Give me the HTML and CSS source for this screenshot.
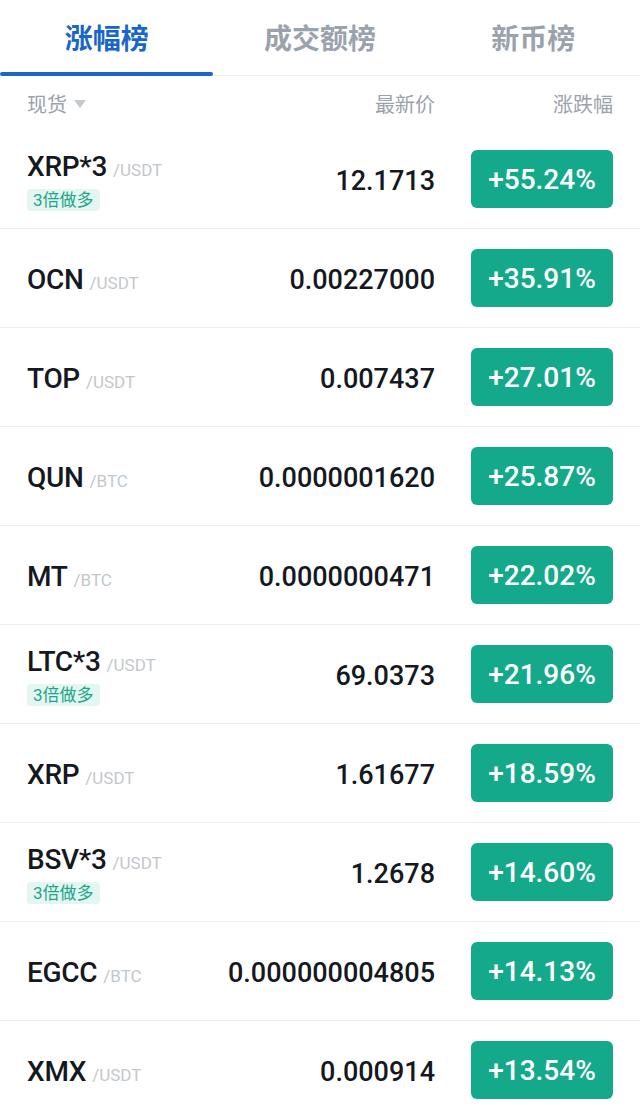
FILE: index.html
```html
<!DOCTYPE html>
<html lang="zh">
<head>
<meta charset="utf-8">
<link rel="stylesheet" href="styles.css">
</head>
<body>
<div class="page">
  <nav class="tabs">
    <div class="tab active">涨幅榜</div>
    <div class="tab">成交额榜</div>
    <div class="tab">新币榜</div>
  </nav>
  <div class="head">
    <div class="h-name">现货<span class="caret"></span></div>
    <div class="h-price">最新价</div>
    <div class="h-change">涨跌幅</div>
  </div>
  <ul class="list">
    <li class="row"><div class="sym"><div class="pair"><span class="name">XRP*3</span><span class="quote">/USDT</span></div><span class="tag">3倍做多</span></div><div class="price">12.1713</div><div class="chg">+55.24%</div></li>
    <li class="row"><div class="sym"><div class="pair"><span class="name">OCN</span><span class="quote">/USDT</span></div></div><div class="price">0.00227000</div><div class="chg">+35.91%</div></li>
    <li class="row"><div class="sym"><div class="pair"><span class="name">TOP</span><span class="quote">/USDT</span></div></div><div class="price">0.007437</div><div class="chg">+27.01%</div></li>
    <li class="row"><div class="sym"><div class="pair"><span class="name">QUN</span><span class="quote">/BTC</span></div></div><div class="price">0.0000001620</div><div class="chg">+25.87%</div></li>
    <li class="row"><div class="sym"><div class="pair"><span class="name">MT</span><span class="quote">/BTC</span></div></div><div class="price">0.0000000471</div><div class="chg">+22.02%</div></li>
    <li class="row"><div class="sym"><div class="pair"><span class="name">LTC*3</span><span class="quote">/USDT</span></div><span class="tag">3倍做多</span></div><div class="price">69.0373</div><div class="chg">+21.96%</div></li>
    <li class="row"><div class="sym"><div class="pair"><span class="name">XRP</span><span class="quote">/USDT</span></div></div><div class="price">1.61677</div><div class="chg">+18.59%</div></li>
    <li class="row"><div class="sym"><div class="pair"><span class="name">BSV*3</span><span class="quote">/USDT</span></div><span class="tag">3倍做多</span></div><div class="price">1.2678</div><div class="chg">+14.60%</div></li>
    <li class="row"><div class="sym"><div class="pair"><span class="name">EGCC</span><span class="quote">/BTC</span></div></div><div class="price">0.000000004805</div><div class="chg">+14.13%</div></li>
    <li class="row"><div class="sym"><div class="pair"><span class="name">XMX</span><span class="quote">/USDT</span></div></div><div class="price">0.000914</div><div class="chg">+13.54%</div></li>
  </ul>
</div>
</body>
</html>
```

FILE: styles.css
```css
* { box-sizing: border-box; }
html, body { margin: 0; padding: 0; background: #fff; }
body {
  font-family: Roboto, "Noto Sans CJK SC", sans-serif;
  color: #15191f;
  overflow: hidden;
}
.page { width: 640px; }

.tabs {
  display: flex;
  height: 76px;
  border-bottom: 1px solid #eef0f2;
}
.tab {
  flex: 1;
  display: flex;
  align-items: center;
  justify-content: center;
  padding-bottom: 2px;
  font-family: "Noto Sans CJK SC", sans-serif;
  font-size: 28px;
  font-weight: 700;
  color: #9aa3ad;
  position: relative;
}
.tab.active { color: #1a66c8; }
.tab.active::after {
  content: "";
  position: absolute;
  left: 0;
  right: 0;
  bottom: -1px;
  height: 4px;
  border-radius: 2px;
  background: #1a66c8;
}

.head {
  display: flex;
  align-items: center;
  height: 54px;
  padding: 0 27px;
  font-family: "Noto Sans CJK SC", sans-serif;
  font-size: 20px;
  color: #9aa3ab;
}
.h-name { flex: 1; display: flex; align-items: center; }
.caret {
  display: inline-block;
  margin-left: 7px;
  margin-top: 1px;
  width: 0;
  height: 0;
  border-left: 6px solid transparent;
  border-right: 6px solid transparent;
  border-top: 8px solid #c4c9cf;
}
.h-price { text-align: right; }
.h-change { width: 178px; text-align: right; }

.list { list-style: none; margin: 0; padding: 0; }
.row {
  display: flex;
  align-items: center;
  height: 99px;
  padding: 0 27px;
  border-bottom: 1px solid #eceef0;
}
.sym {
  flex: 1;
  display: flex;
  flex-direction: column;
  align-items: flex-start;
  padding-top: 2px;
}
.pair { display: flex; align-items: baseline; }
.name {
  font-size: 28px;
  font-weight: 500;
  color: #15191f;
  letter-spacing: -0.3px;
}
.quote {
  margin-left: 6px;
  font-size: 17px;
  color: #c3c7cc;
}
.tag {
  margin-top: 6px;
  height: 22px;
  line-height: 22px;
  padding: 0 6px;
  border-radius: 4px;
  background: #e4f6f1;
  color: #1ea688;
  font-family: Roboto, "Noto Sans CJK SC", sans-serif;
  font-size: 17px;
}
.price {
  font-size: 27px;
  font-weight: 500;
  color: #15191f;
  text-align: right;
  padding-top: 4px;
}
.chg {
  width: 142px;
  height: 58px;
  margin-left: 36px;
  border-radius: 6px;
  background: #14a98a;
  color: #fff;
  font-size: 28px;
  font-weight: 500;
  display: flex;
  align-items: center;
  justify-content: center;
}
```
